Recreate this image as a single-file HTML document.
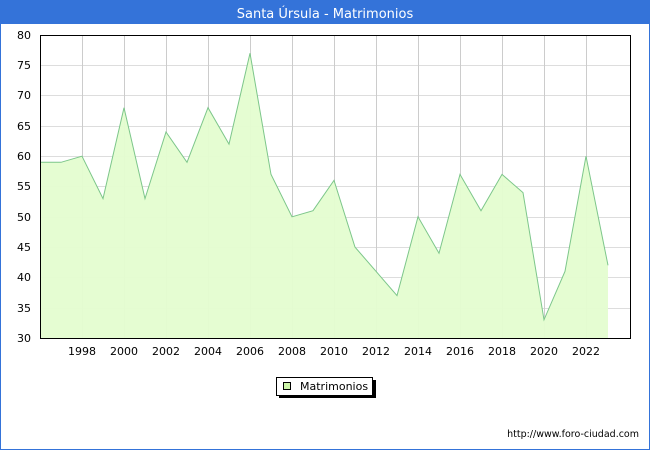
<!DOCTYPE html>
<html><head><style>
body{margin:0;width:650px;height:450px;overflow:hidden;background:#fff;font-family:"DejaVu Sans","Liberation Sans",sans-serif;}
</style></head><body>
<svg width="650" height="450" xmlns="http://www.w3.org/2000/svg" font-family="DejaVu Sans, Liberation Sans, sans-serif">
<rect x="0.5" y="0.5" width="649" height="449" fill="#fff" stroke="#3473d9"/>
<rect x="0" y="0" width="650" height="24" fill="#3473d9"/>
<text x="325" y="18" fill="#fff" font-size="13" text-anchor="middle">Santa Úrsula - Matrimonios</text>
<g stroke="#ddd" stroke-width="1">
<line x1="40" x2="630" y1="65.5" y2="65.5"/><line x1="40" x2="630" y1="95.5" y2="95.5"/><line x1="40" x2="630" y1="126.5" y2="126.5"/><line x1="40" x2="630" y1="156.5" y2="156.5"/><line x1="40" x2="630" y1="186.5" y2="186.5"/><line x1="40" x2="630" y1="217.5" y2="217.5"/><line x1="40" x2="630" y1="247.5" y2="247.5"/><line x1="40" x2="630" y1="277.5" y2="277.5"/><line x1="40" x2="630" y1="308.5" y2="308.5"/>
</g>
<g stroke="#ccc">
<line x1="82.5" x2="82.5" y1="35" y2="338"/><line x1="124.5" x2="124.5" y1="35" y2="338"/><line x1="166.5" x2="166.5" y1="35" y2="338"/><line x1="208.5" x2="208.5" y1="35" y2="338"/><line x1="250.5" x2="250.5" y1="35" y2="338"/><line x1="292.5" x2="292.5" y1="35" y2="338"/><line x1="334.5" x2="334.5" y1="35" y2="338"/><line x1="376.5" x2="376.5" y1="35" y2="338"/><line x1="418.5" x2="418.5" y1="35" y2="338"/><line x1="460.5" x2="460.5" y1="35" y2="338"/><line x1="502.5" x2="502.5" y1="35" y2="338"/><line x1="544.5" x2="544.5" y1="35" y2="338"/><line x1="586.5" x2="586.5" y1="35" y2="338"/>
</g>
<path d="M40,338 L40,162.3 L61,162.3 L82,156.2 L103,198.6 L124,107.7 L145,198.6 L166,132 L187,162.3 L208,107.7 L229,144.1 L250,53.2 L271,174.4 L292,216.8 L313,210.7 L334,180.4 L355,247.1 L376,271.3 L397,295.6 L418,216.8 L439,253.2 L460,174.4 L481,210.7 L502,174.4 L523,192.6 L544,319.8 L565,271.3 L586,156.2 L608,265.3 L608,338 Z" fill="#e4fdd0" fill-opacity="0.95"/>
<path d="M40,162.3 L61,162.3 L82,156.2 L103,198.6 L124,107.7 L145,198.6 L166,132 L187,162.3 L208,107.7 L229,144.1 L250,53.2 L271,174.4 L292,216.8 L313,210.7 L334,180.4 L355,247.1 L376,271.3 L397,295.6 L418,216.8 L439,253.2 L460,174.4 L481,210.7 L502,174.4 L523,192.6 L544,319.8 L565,271.3 L586,156.2 L608,265.3" fill="none" stroke="#7cc68a" stroke-width="1"/>
<rect x="40.5" y="35.5" width="590" height="303" fill="none" stroke="#000"/>
<g font-size="11" fill="#000" text-anchor="end">
<text x="31" y="39">80</text><text x="31" y="69">75</text><text x="31" y="99">70</text><text x="31" y="130">65</text><text x="31" y="160">60</text><text x="31" y="190">55</text><text x="31" y="221">50</text><text x="31" y="251">45</text><text x="31" y="281">40</text><text x="31" y="312">35</text><text x="31" y="342">30</text>
</g>
<g font-size="11" fill="#000" text-anchor="middle">
<text x="82" y="355">1998</text><text x="124" y="355">2000</text><text x="166" y="355">2002</text><text x="208" y="355">2004</text><text x="250" y="355">2006</text><text x="292" y="355">2008</text><text x="334" y="355">2010</text><text x="376" y="355">2012</text><text x="418" y="355">2014</text><text x="460" y="355">2016</text><text x="502" y="355">2018</text><text x="544" y="355">2020</text><text x="586" y="355">2022</text>
</g>
<rect x="279" y="380" width="97" height="18" fill="#000"/>
<rect x="276.5" y="377.5" width="96" height="18" fill="#fff" stroke="#000"/>
<rect x="283.5" y="382.5" width="7" height="7" fill="#ccf5a8" stroke="#000"/>
<text x="300" y="390" font-size="11">Matrimonios</text>
<text x="639" y="437" font-size="9.5" text-anchor="end">http://www.foro-ciudad.com</text>
</svg>
</body></html>
